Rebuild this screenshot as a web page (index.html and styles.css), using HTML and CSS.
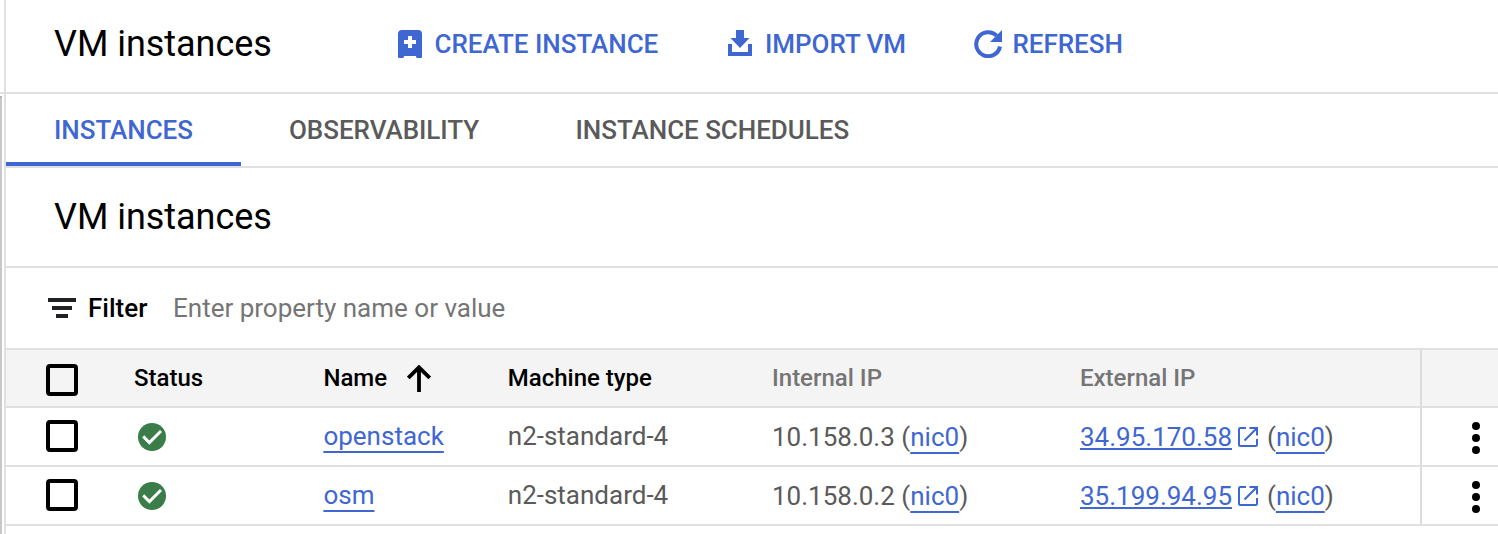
FILE: index.html
```html
<!DOCTYPE html>
<html lang="en">
<head>
<meta charset="utf-8">
<title>VM instances</title>
<link rel="stylesheet" href="styles.css">
</head>
<body>
<svg class="defs" width="0" height="0" aria-hidden="true">
  <symbol id="check" viewBox="0 0 28 28"><circle cx="14" cy="14" r="14" fill="#3a7d49"/><path d="M5.2 13.4l6.2 6.2L23 8" fill="none" stroke="#fff" stroke-width="2.9"/></symbol>
  <symbol id="external" viewBox="0 0 20 20"><path d="M8 1H2.2Q1 1 1 2.2V17.8Q1 19 2.2 19H17.8Q19 19 19 17.8V12M11.5 1H19V8.5M19 1L6.5 13.5" fill="none" stroke="#3f67d2" stroke-width="2"/></symbol>
  <symbol id="more" viewBox="0 0 8 32"><circle cx="4" cy="4" r="4"/><circle cx="4" cy="16" r="4"/><circle cx="4" cy="28" r="4"/></symbol>
</svg>
<div class="app">
  <div class="gutter"><div class="gutter-top"></div><div class="gutter-bar"></div></div>
  <main class="main">
    <header class="toolbar">
      <h1 class="title">VM instances</h1>
      <button class="action create"><svg width="24" height="28" viewBox="0 0 24 28"><path fill="#3f67d2" fill-rule="evenodd" d="M4 0H20Q24 0 24 4V27Q24 28 23 28H19Q18 28 18 26H6Q6 28 5 28H1Q0 28 0 27V4Q0 0 4 0ZM10 6V10H6V14H10V18H14V14H18V10H14V6Z"/></svg><span>CREATE INSTANCE</span></button>
      <button class="action import"><svg width="24" height="26" viewBox="0 0 24 26"><path fill="#3f67d2" d="M8 0H16V8H21.5L12 18L2.5 8H8ZM0 14H4V22H20V14H24V26H0Z"/></svg><span>IMPORT VM</span></button>
      <button class="action refresh"><svg width="28" height="28" viewBox="0 0 28 28"><path d="M26 16.5A12 12 0 1 1 22.6 5.6" fill="none" stroke="#3f67d2" stroke-width="4"/><path fill="#3f67d2" d="M28 0V12H16Z"/></svg><span>REFRESH</span></button>
    </header>
    <nav class="tabs">
      <a class="tab active">INSTANCES</a>
      <a class="tab observability">OBSERVABILITY</a>
      <a class="tab schedules">INSTANCE SCHEDULES</a>
    </nav>
    <section class="heading"><h2 class="title">VM instances</h2></section>
    <div class="filter">
      <svg width="28" height="20" viewBox="0 0 28 20"><path fill="#202124" d="M0 0H28V4H0ZM4 8H24V12H4ZM8 16H20V20H8Z"/></svg>
      <span class="filter-label">Filter</span>
      <span class="filter-hint">Enter property name or value</span>
    </div>
    <div class="table">
      <div class="row head">
        <div class="cell"><span class="box"></span></div>
        <div class="cell">Status</div>
        <div class="cell">Name<svg class="sort" width="24" height="27" viewBox="0 0 24 27"><path d="M12 27V2M1.3 13L12 2.3L22.7 13" fill="none" stroke="#000" stroke-width="3.8"/></svg></div>
        <div class="cell">Machine type</div>
        <div class="cell muted">Internal IP</div>
        <div class="cell muted">External IP</div>
        <div class="cell menu"></div>
      </div>
      <div class="row">
        <div class="cell"><span class="box"></span></div>
        <div class="cell"><svg class="status" width="28" height="28"><use href="#check"/></svg></div>
        <div class="cell"><a class="link">openstack</a></div>
        <div class="cell">n2-standard-4</div>
        <div class="cell ip"><span class="addr">10.158.0.3</span><span class="nic">(<a class="link">nic0</a>)</span></div>
        <div class="cell ip"><a class="link close">34.95.170.58</a><svg class="ext" width="20" height="20"><use href="#external"/></svg><span class="nic">(<a class="link">nic0</a>)</span></div>
        <div class="cell menu"><svg width="8" height="32"><use href="#more"/></svg></div>
      </div>
      <div class="row">
        <div class="cell"><span class="box"></span></div>
        <div class="cell"><svg class="status" width="28" height="28"><use href="#check"/></svg></div>
        <div class="cell"><a class="link">osm</a></div>
        <div class="cell">n2-standard-4</div>
        <div class="cell ip"><span class="addr">10.158.0.2</span><span class="nic">(<a class="link">nic0</a>)</span></div>
        <div class="cell ip"><a class="link close">35.199.94.95</a><svg class="ext" width="20" height="20"><use href="#external"/></svg><span class="nic">(<a class="link">nic0</a>)</span></div>
        <div class="cell menu"><svg width="8" height="32"><use href="#more"/></svg></div>
      </div>
    </div>
  </main>
</div>
</body>
</html>
```
FILE: styles.css
```css
* { box-sizing: border-box; }
body { margin: 0; background: #fff; font-family: Roboto, "Liberation Sans", sans-serif; font-size: 26px; color: #000; overflow: hidden; }
svg { display: block; flex: none; }
.defs { display: none; }
.app { display: flex; height: 534px; }
.gutter { width: 4px; flex: none; display: flex; flex-direction: column; }
.gutter-top { height: 94px; border-bottom: 2px solid #e0e0e0; }
.gutter-bar { flex: 1; margin-top: 2px; width: 2px; background: #c8c8ca; border-top: 2px solid #b4b4b4; }
.main { flex: 1; min-width: 0; border-left: 2px solid #e0e0e0; }
.title { margin: 0; font-size: 36px; font-weight: 400; line-height: 42px; letter-spacing: -0.04px; white-space: nowrap; }
.toolbar { height: 94px; border-bottom: 2px solid #e0e0e0; padding-left: 48px; display: flex; align-items: flex-start; }
.toolbar .title { width: 344px; padding-top: 23px; }
.action { border: 0; background: none; padding: 0; margin: 30px 0 0; height: 28px; display: flex; align-items: flex-start; font: 500 26px/28px Roboto, sans-serif; letter-spacing: -0.03px; color: #3f67d2; white-space: nowrap; }
.create { width: 330px; gap: 12.5px; }
.import { width: 246px; gap: 13px; }
.refresh { gap: 10.5px; }
.tabs { height: 74px; border-bottom: 2px solid #e0e0e0; display: flex; font-weight: 500; line-height: 72px; letter-spacing: -0.04px; color: #5a5a5a; white-space: nowrap; }
.tab { padding-left: 48px; height: 72px; }
.tab.active { width: 235px; color: #3f67d2; border-bottom: 4px solid #3f67d2; }
.observability { width: 286.5px; }
.heading { height: 100px; border-bottom: 2px solid #e0e0e0; padding: 28px 0 0 48px; }
.filter { height: 82px; border-bottom: 2px solid #e0e0e0; padding-left: 42px; display: flex; align-items: center; white-space: nowrap; }
.filter-label { margin-left: 12px; width: 85px; font-weight: 500; }
.filter-hint { color: #757575; }
.row { display: grid; grid-template-columns: 88px 189.4px 184.4px 264.2px 308px 340px 1fr; padding-left: 40px; height: 59px; border-bottom: 2px solid #e0e0e0; color: #5a5a5a; line-height: 57px; white-space: nowrap; }
.head { height: 58px; background: #f4f4f4; color: #000; font-size: 24px; font-weight: 500; line-height: 56px; }
.cell { display: flex; }
.box { width: 32px; height: 32px; margin-top: 12px; border: 4px solid #000; border-radius: 4px; }
.head .box { margin-top: 14px; }
.status { margin: 15px 0 0 4px; }
.sort { margin: 15px 0 0 20px; }
.muted { color: #757575; }
.ip { padding-top: 1px; }
.addr { width: 129.4px; }
.link { color: #3f67d2; text-decoration: underline; text-decoration-thickness: 2px; text-underline-offset: 6px; text-decoration-skip-ink: none; }
.close { width: 158px; text-underline-offset: 2px; }
.ext { margin: 18px 9px 0 0; }
.menu { border-left: 2px solid #dcdcdc; padding: 14px 0 0 50px; }
```
